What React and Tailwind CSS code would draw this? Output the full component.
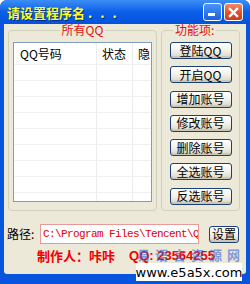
import React from 'react';

const cjk = { fontFamily: '"Noto Sans CJK SC", "Liberation Sans", sans-serif' };

const XpButton = ({ children, className = '' }) => (
    <button
        className={`flex items-center justify-center rounded-[3px] border border-[#1c3f74] bg-gradient-to-b from-white via-[#f2f1ea] to-[#d8d5c6] text-[12px] leading-none text-black shadow-[inset_0_-2px_0_#cbc7b6] ${className}`}
    >
        {children}
    </button>
);

const rows = Array.from({ length: 9 });

export default function App() {
    return (
        <div
            className="relative w-[250px] h-[284px] flex flex-col overflow-hidden rounded-t-[7px] bg-[#0855dd]"
            style={cjk}
        >
            {/* Title bar */}
            <div className="h-[24px] flex items-center justify-between pl-[7px] pr-[7px] bg-gradient-to-b from-[#3c8ef6] via-[#0a5ee8] to-[#0452dc]">
                <span className="text-[13px] font-bold leading-none text-[#ffff2a] [text-shadow:1px_1px_0_#0a2a80] whitespace-nowrap">
                    请设置程序名<span className="ml-[3px] tracking-[8px]">...</span>
                </span>
                <div className="flex items-center gap-[2px]">
                    <div className="w-[19px] h-[18px] rounded-[3px] border border-white bg-gradient-to-b from-[#4a93f8] to-[#1d5fe0] flex items-end pl-[4px] pb-[4px]">
                        <div className="w-[7px] h-[3px] bg-white" />
                    </div>
                    <div className="w-[19px] h-[18px] rounded-[3px] border border-white bg-gradient-to-b from-[#f08a6a] via-[#e0542c] to-[#c8401c] flex items-center justify-center">
                        <svg width="11" height="11" viewBox="0 0 11 11">
                            <path d="M2 2 L9 9 M9 2 L2 9" stroke="white" strokeWidth="2.4" strokeLinecap="square" />
                        </svg>
                    </div>
                </div>
            </div>

            {/* Body */}
            <div className="flex-1 mx-[4px] mb-[10px] bg-[#ece9d8] flex flex-col rounded-b-[3px]">
                <div className="flex gap-[4px] pl-[4px]">
                    {/* All QQ group */}
                    <fieldset className="w-[149px] h-[187px] border border-[#d0d0bf] rounded-[4px] px-[4px]">
                        <legend className="mx-auto px-[2px] text-[12px] leading-[12px] text-[#e01010]">所有QQ</legend>
                        <div className="mt-[6px] h-[160px] border border-[#7f9db9] bg-white overflow-hidden">
                            <div className="flex h-[22px] items-center text-[12px] text-black border-b border-[#f0f0f0]">
                                <div className="w-[83px] h-full flex items-center pl-[6px] border-r border-[#ececec]">QQ号码</div>
                                <div className="w-[36px] h-full flex items-center pl-[5px] border-r border-[#ececec]">状态</div>
                                <div className="flex-1 h-full flex items-center pl-[5px]">隐</div>
                            </div>
                            {rows.map((_, i) => (
                                <div key={i} className="flex h-[16px] border-b border-[#f0f0f0]">
                                    <div className="w-[83px] border-r border-[#ececec]" />
                                    <div className="w-[36px] border-r border-[#ececec]" />
                                    <div className="flex-1" />
                                </div>
                            ))}
                        </div>
                    </fieldset>

                    {/* Function group */}
                    <fieldset className="w-[79px] h-[187px] border border-[#d0d0bf] rounded-[4px] flex flex-col items-center">
                        <legend className="ml-[11px] px-[2px] text-[12px] leading-[12px] text-[#e01010]">功能项:</legend>
                        <div className="mt-[6px] flex flex-col gap-[7.3px]">
                            {['登陆QQ', '开启QQ', '增加账号', '修改账号', '删除账号', '全选账号', '反选账号'].map((t) => (
                                <XpButton key={t} className="w-[62px] h-[17px]">{t}</XpButton>
                            ))}
                        </div>
                    </fieldset>
                </div>

                {/* Path row */}
                <div className="mt-[13px] flex items-center pl-[3px]">
                    <span className="w-[33px] text-[12px] text-black">路径:</span>
                    <div className="w-[159px] h-[20px] border border-[#e89a9a] bg-white flex items-center pl-[2px] overflow-hidden">
                        <span className="text-[11px] tracking-[-0.6px] text-[#e00000] whitespace-nowrap" style={{ fontFamily: '"Liberation Mono", monospace' }}>
                            C:\Program Files\Tencent\Q
                        </span>
                    </div>
                    <XpButton className="ml-[10px] w-[30px] h-[17px]">设置</XpButton>
                </div>

                {/* Credits */}
                <div className="mt-[4px] flex items-center pl-[33px] text-[13px] font-bold text-[#f00000] leading-[15px]">
                    <span>制作人：咔咔</span>
                    <span className="ml-[14px]" style={{ fontFamily: '"Liberation Sans", sans-serif' }}>QQ: 23564255</span>
                </div>
            </div>

            {/* Watermark overlay */}
            <div className="absolute left-[137px] top-[248px] text-[13px] font-bold tracking-[5px] text-[#3a64d8] opacity-60 leading-none whitespace-nowrap">
                易语言资源网
            </div>
            <div
                className="absolute left-[136px] top-[263px] w-[106px] h-[18px] bg-white flex items-center justify-center text-[13px] text-black leading-none"
                style={{ fontFamily: '"DejaVu Sans", sans-serif' }}
            >
                www.e5a5x.com
            </div>
        </div>
    );
}
